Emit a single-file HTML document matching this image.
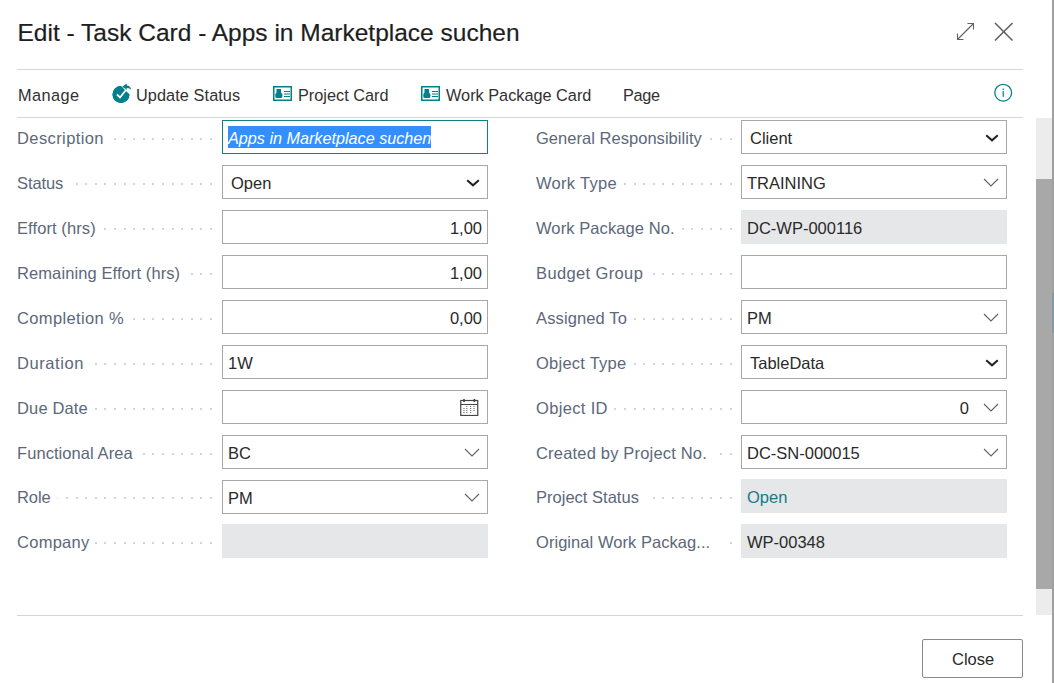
<!DOCTYPE html>
<html><head><meta charset="utf-8"><style>
html,body{margin:0;padding:0;width:1054px;height:683px;overflow:hidden;background:#fff;font-family:"Liberation Sans",sans-serif;}
.a{position:absolute}
.t,.lbl{position:absolute;font-size:16.5px;line-height:16.5px;white-space:nowrap;color:#2a2a2a}
.lbl{color:#5c687a}
.r{text-align:right}
.fld{position:absolute;border:1px solid #a8a8a8;background:#fff}
.fld.focus{border-color:#0e8080}
.ro{position:absolute;background:#e6e7e9}
.sel{position:absolute;background:#338fff}
.it{font-style:italic;color:#fff}
.ic{position:absolute;line-height:0}
.dot{position:absolute;width:2px;height:2px;border-radius:1px;background:#c3c7cd}
.ic svg{display:block}
</style></head><body>
<div class="t" style="left:17.5px;top:20.86px;font-size:24.5px;line-height:24.5px;color:#1e1e1e;-webkit-text-stroke:0.2px #1e1e1e">Edit - Task Card - Apps in Marketplace suchen</div>
<svg class="a" style="left:955px;top:21px" width="20" height="20" viewBox="0 0 20 20"><g fill="none" stroke="#616161" stroke-width="1.1"><path d="M2.5 18.5 L18.5 2.5"/><path d="M12.5 2.5 H18.5 V8.5"/><path d="M2.5 12.5 V18.5 H8.5"/></g></svg>
<svg class="a" style="left:993px;top:21px" width="21" height="21" viewBox="0 0 21 21"><g fill="none" stroke="#616161" stroke-width="1.6"><path d="M2 2 L19.5 19.5"/><path d="M19.5 2 L2 19.5"/></g></svg>
<div class="a" style="left:17px;top:69px;width:1006px;height:1px;background:#d2d5d9"></div>
<div class="a" style="left:17px;top:117px;width:1006px;height:1px;background:#d2d5d9"></div>
<div class="t" style="left:18px;top:86.63px;color:#323130;font-size:16.3px;letter-spacing:0.45px">Manage</div>
<svg class="a" style="left:111px;top:83px" width="21" height="21" viewBox="0 0 21 21"><path d="M10 3 A8.5 8.5 0 1 0 18.5 11.5" fill="#00808a"/><path fill="#00808a" d="M10 3 A8.5 8.5 0 0 0 1.5 11.5 A8.5 8.5 0 0 0 18.5 11.5 L14 8 Z"/><path d="M6 11.5 L9 14.5 L15 7" fill="none" stroke="#fff" stroke-width="1.8"/><path d="M11.2 3.7 L15.8 0.6 L15.8 2.5 Q19.4 2.7 20.2 6.8 Q18.6 4.9 15.8 5.0 L15.8 6.8 Z" fill="#00808a"/></svg>
<div class="t" style="left:136px;top:86.63px;color:#323130;font-size:16.3px;letter-spacing:0.08px">Update Status</div>
<svg class="a" style="left:273px;top:86px" width="19" height="15" viewBox="0 0 19 15"><rect x="0.75" y="0.75" width="17.5" height="13.5" fill="none" stroke="#00808a" stroke-width="1.5"/><path d="M3.5 3 H8 V6.5 Q9.5 7.5 9.5 9.5 Q9.5 12 8 12 H3.5 Q2.2 12 2.2 9.5 Q2.2 7.5 3.5 6.5 Z" fill="#00808a"/><g stroke="#00808a" stroke-width="1"><line x1="11" y1="5.5" x2="17" y2="5.5"/><line x1="11" y1="8" x2="17" y2="8"/><line x1="11" y1="10.5" x2="17" y2="10.5"/></g></svg>
<div class="t" style="left:298px;top:86.63px;color:#323130;font-size:16.3px">Project Card</div>
<svg class="a" style="left:421px;top:86px" width="19" height="15" viewBox="0 0 19 15"><rect x="0.75" y="0.75" width="17.5" height="13.5" fill="none" stroke="#00808a" stroke-width="1.5"/><path d="M3.5 3 H8 V6.5 Q9.5 7.5 9.5 9.5 Q9.5 12 8 12 H3.5 Q2.2 12 2.2 9.5 Q2.2 7.5 3.5 6.5 Z" fill="#00808a"/><g stroke="#00808a" stroke-width="1"><line x1="11" y1="5.5" x2="17" y2="5.5"/><line x1="11" y1="8" x2="17" y2="8"/><line x1="11" y1="10.5" x2="17" y2="10.5"/></g></svg>
<div class="t" style="left:446px;top:86.63px;color:#323130;font-size:16.3px">Work Package Card</div>
<div class="t" style="left:623px;top:86.63px;color:#323130;font-size:16.3px;letter-spacing:-0.3px">Page</div>
<svg class="a" style="left:993px;top:83px" width="21" height="21" viewBox="0 0 21 21"><circle cx="10.2" cy="9.7" r="8.4" fill="none" stroke="#00808a" stroke-width="1.3"/><circle cx="10.2" cy="6.3" r="0.8" fill="#00808a"/><rect x="9.6" y="8" width="1.2" height="5.8" fill="#00808a"/></svg>
<div class="lbl" style="left:17px;top:130.03px;letter-spacing:0.4px">Description</div><b class="dot" style="left:210px;top:138px"></b><b class="dot" style="left:200px;top:138px"></b><b class="dot" style="left:191px;top:138px"></b><b class="dot" style="left:181px;top:138px"></b><b class="dot" style="left:172px;top:138px"></b><b class="dot" style="left:162px;top:138px"></b><b class="dot" style="left:152px;top:138px"></b><b class="dot" style="left:143px;top:138px"></b><b class="dot" style="left:133px;top:138px"></b><b class="dot" style="left:124px;top:138px"></b><b class="dot" style="left:114px;top:138px"></b><div class="fld focus" style="left:222px;top:120px;width:264px;height:32px"></div><div class="sel" style="left:228px;top:126px;width:203px;height:22px"></div><div class="t it" style="left:228px;top:130.03px;font-size:16.2px">Apps in Marketplace suchen</div><div class="lbl" style="left:17px;top:175.03px;letter-spacing:-0.1px">Status</div><b class="dot" style="left:210px;top:183px"></b><b class="dot" style="left:200px;top:183px"></b><b class="dot" style="left:191px;top:183px"></b><b class="dot" style="left:181px;top:183px"></b><b class="dot" style="left:172px;top:183px"></b><b class="dot" style="left:162px;top:183px"></b><b class="dot" style="left:152px;top:183px"></b><b class="dot" style="left:143px;top:183px"></b><b class="dot" style="left:133px;top:183px"></b><b class="dot" style="left:124px;top:183px"></b><b class="dot" style="left:114px;top:183px"></b><b class="dot" style="left:104px;top:183px"></b><b class="dot" style="left:95px;top:183px"></b><b class="dot" style="left:85px;top:183px"></b><b class="dot" style="left:76px;top:183px"></b><div class="fld" style="left:222px;top:165px;width:264px;height:32px"></div><div class="t" style="left:231px;top:175.03px">Open</div><div class="ic" style="left:466px;top:179px"><svg class="chev" width="14" height="8" viewBox="0 0 14 8"><path d="M1.2 1.2 L7 6.3 L12.8 1.2" fill="none" stroke="#212121" stroke-width="2"/></svg></div><div class="lbl" style="left:17px;top:220.03px;letter-spacing:0.091px">Effort (hrs)</div><b class="dot" style="left:210px;top:228px"></b><b class="dot" style="left:200px;top:228px"></b><b class="dot" style="left:191px;top:228px"></b><b class="dot" style="left:181px;top:228px"></b><b class="dot" style="left:172px;top:228px"></b><b class="dot" style="left:162px;top:228px"></b><b class="dot" style="left:152px;top:228px"></b><b class="dot" style="left:143px;top:228px"></b><b class="dot" style="left:133px;top:228px"></b><b class="dot" style="left:124px;top:228px"></b><b class="dot" style="left:114px;top:228px"></b><b class="dot" style="left:104px;top:228px"></b><div class="fld" style="left:222px;top:210px;width:264px;height:32px"></div><div class="t r" style="right:572px;top:220.03px">1,00</div><div class="lbl" style="left:17px;top:265.03px;letter-spacing:0.095px">Remaining Effort (hrs)</div><b class="dot" style="left:210px;top:273px"></b><b class="dot" style="left:200px;top:273px"></b><b class="dot" style="left:191px;top:273px"></b><div class="fld" style="left:222px;top:255px;width:264px;height:32px"></div><div class="t r" style="right:572px;top:265.03px">1,00</div><div class="lbl" style="left:17px;top:310.03px;letter-spacing:0.364px">Completion %</div><b class="dot" style="left:210px;top:318px"></b><b class="dot" style="left:200px;top:318px"></b><b class="dot" style="left:191px;top:318px"></b><b class="dot" style="left:181px;top:318px"></b><b class="dot" style="left:172px;top:318px"></b><b class="dot" style="left:162px;top:318px"></b><b class="dot" style="left:152px;top:318px"></b><b class="dot" style="left:143px;top:318px"></b><b class="dot" style="left:133px;top:318px"></b><div class="fld" style="left:222px;top:300px;width:264px;height:32px"></div><div class="t r" style="right:572px;top:310.03px">0,00</div><div class="lbl" style="left:17px;top:355.03px;letter-spacing:0.571px">Duration</div><b class="dot" style="left:210px;top:363px"></b><b class="dot" style="left:200px;top:363px"></b><b class="dot" style="left:191px;top:363px"></b><b class="dot" style="left:181px;top:363px"></b><b class="dot" style="left:172px;top:363px"></b><b class="dot" style="left:162px;top:363px"></b><b class="dot" style="left:152px;top:363px"></b><b class="dot" style="left:143px;top:363px"></b><b class="dot" style="left:133px;top:363px"></b><b class="dot" style="left:124px;top:363px"></b><b class="dot" style="left:114px;top:363px"></b><b class="dot" style="left:104px;top:363px"></b><b class="dot" style="left:95px;top:363px"></b><div class="fld" style="left:222px;top:345px;width:264px;height:32px"></div><div class="t" style="left:228px;top:355.03px">1W</div><div class="lbl" style="left:17px;top:400.03px;letter-spacing:0.143px">Due Date</div><b class="dot" style="left:210px;top:408px"></b><b class="dot" style="left:200px;top:408px"></b><b class="dot" style="left:191px;top:408px"></b><b class="dot" style="left:181px;top:408px"></b><b class="dot" style="left:172px;top:408px"></b><b class="dot" style="left:162px;top:408px"></b><b class="dot" style="left:152px;top:408px"></b><b class="dot" style="left:143px;top:408px"></b><b class="dot" style="left:133px;top:408px"></b><b class="dot" style="left:124px;top:408px"></b><b class="dot" style="left:114px;top:408px"></b><b class="dot" style="left:104px;top:408px"></b><b class="dot" style="left:95px;top:408px"></b><div class="fld" style="left:222px;top:390px;width:264px;height:32px"></div><div class="ic" style="left:460px;top:399px"><svg class="cal" width="19" height="17" viewBox="0 0 19 17"><rect x="0.75" y="1.5" width="17" height="15" fill="none" stroke="#444" stroke-width="1.2"/><line x1="0.75" y1="5.5" x2="17.75" y2="5.5" stroke="#444" stroke-width="1"/><rect x="3.2" y="0" width="1.6" height="3" fill="#444"/><rect x="13.6" y="0" width="1.6" height="3" fill="#444"/>
<g fill="#777"><rect x="6.2" y="7" width="1.2" height="1"/><rect x="10" y="7" width="1.2" height="1"/><rect x="13.4" y="7" width="1.2" height="1"/>
<rect x="3.4" y="9" width="1.2" height="1"/><rect x="6.2" y="9" width="1.2" height="1"/><rect x="10" y="9" width="1.2" height="1"/><rect x="13.4" y="9" width="1.2" height="1"/>
<rect x="3.4" y="11" width="1.2" height="1"/><rect x="6.2" y="11" width="1.2" height="1"/><rect x="10" y="11" width="1.2" height="1"/><rect x="13.4" y="11" width="1.2" height="1"/>
<rect x="3.4" y="13" width="1.2" height="1"/><rect x="6.2" y="13" width="1.2" height="1"/><rect x="10" y="13" width="1.2" height="1"/></g></svg></div><div class="lbl" style="left:17px;top:445.03px;letter-spacing:0.071px">Functional Area</div><b class="dot" style="left:210px;top:453px"></b><b class="dot" style="left:200px;top:453px"></b><b class="dot" style="left:191px;top:453px"></b><b class="dot" style="left:181px;top:453px"></b><b class="dot" style="left:172px;top:453px"></b><b class="dot" style="left:162px;top:453px"></b><b class="dot" style="left:152px;top:453px"></b><b class="dot" style="left:143px;top:453px"></b><div class="fld" style="left:222px;top:435px;width:264px;height:32px"></div><div class="t" style="left:228px;top:445.03px">BC</div><div class="ic" style="left:464px;top:448px"><svg class="chev" width="16" height="9" viewBox="0 0 16 9"><path d="M1 1 L8 8 L15 1" fill="none" stroke="#616161" stroke-width="1.1"/></svg></div><div class="lbl" style="left:17px;top:489.03px;letter-spacing:-0.1px">Role</div><b class="dot" style="left:57px;top:497px;width:1px;opacity:0.5"></b><b class="dot" style="left:210px;top:497px"></b><b class="dot" style="left:200px;top:497px"></b><b class="dot" style="left:191px;top:497px"></b><b class="dot" style="left:181px;top:497px"></b><b class="dot" style="left:172px;top:497px"></b><b class="dot" style="left:162px;top:497px"></b><b class="dot" style="left:152px;top:497px"></b><b class="dot" style="left:143px;top:497px"></b><b class="dot" style="left:133px;top:497px"></b><b class="dot" style="left:124px;top:497px"></b><b class="dot" style="left:114px;top:497px"></b><b class="dot" style="left:104px;top:497px"></b><b class="dot" style="left:95px;top:497px"></b><b class="dot" style="left:85px;top:497px"></b><b class="dot" style="left:76px;top:497px"></b><b class="dot" style="left:66px;top:497px"></b><div class="fld" style="left:222px;top:480px;width:264px;height:32px"></div><div class="t" style="left:228px;top:490.03px">PM</div><div class="ic" style="left:464px;top:493px"><svg class="chev" width="16" height="9" viewBox="0 0 16 9"><path d="M1 1 L8 8 L15 1" fill="none" stroke="#616161" stroke-width="1.1"/></svg></div><div class="lbl" style="left:17px;top:534.03px;letter-spacing:0.267px">Company</div><b class="dot" style="left:210px;top:542px"></b><b class="dot" style="left:200px;top:542px"></b><b class="dot" style="left:191px;top:542px"></b><b class="dot" style="left:181px;top:542px"></b><b class="dot" style="left:172px;top:542px"></b><b class="dot" style="left:162px;top:542px"></b><b class="dot" style="left:152px;top:542px"></b><b class="dot" style="left:143px;top:542px"></b><b class="dot" style="left:133px;top:542px"></b><b class="dot" style="left:124px;top:542px"></b><b class="dot" style="left:114px;top:542px"></b><b class="dot" style="left:104px;top:542px"></b><b class="dot" style="left:95px;top:542px"></b><div class="ro" style="left:222px;top:524px;width:266px;height:34px"></div><div class="lbl" style="left:536px;top:130.03px;letter-spacing:0.033px">General Responsibility</div><b class="dot" style="left:730px;top:138px"></b><b class="dot" style="left:720px;top:138px"></b><b class="dot" style="left:710px;top:138px"></b><div class="fld" style="left:741px;top:120px;width:264px;height:32px"></div><div class="t" style="left:750px;top:130.03px">Client</div><div class="ic" style="left:985px;top:134px"><svg class="chev" width="14" height="8" viewBox="0 0 14 8"><path d="M1.2 1.2 L7 6.3 L12.8 1.2" fill="none" stroke="#212121" stroke-width="2"/></svg></div><div class="lbl" style="left:536px;top:175.03px;letter-spacing:0.3px">Work Type</div><b class="dot" style="left:730px;top:183px"></b><b class="dot" style="left:720px;top:183px"></b><b class="dot" style="left:710px;top:183px"></b><b class="dot" style="left:701px;top:183px"></b><b class="dot" style="left:691px;top:183px"></b><b class="dot" style="left:682px;top:183px"></b><b class="dot" style="left:672px;top:183px"></b><b class="dot" style="left:662px;top:183px"></b><b class="dot" style="left:653px;top:183px"></b><b class="dot" style="left:643px;top:183px"></b><b class="dot" style="left:634px;top:183px"></b><b class="dot" style="left:624px;top:183px"></b><div class="fld" style="left:741px;top:165px;width:264px;height:32px"></div><div class="t" style="left:747px;top:175.03px">TRAINING</div><div class="ic" style="left:983px;top:178px"><svg class="chev" width="16" height="9" viewBox="0 0 16 9"><path d="M1 1 L8 8 L15 1" fill="none" stroke="#616161" stroke-width="1.1"/></svg></div><div class="lbl" style="left:536px;top:220.03px;letter-spacing:0.093px">Work Package No.</div><b class="dot" style="left:730px;top:228px"></b><b class="dot" style="left:720px;top:228px"></b><b class="dot" style="left:710px;top:228px"></b><b class="dot" style="left:701px;top:228px"></b><b class="dot" style="left:691px;top:228px"></b><b class="dot" style="left:682px;top:228px"></b><div class="ro" style="left:741px;top:210px;width:266px;height:34px"></div><div class="t" style="left:747px;top:220.03px;color:#2a2a2a">DC-WP-000116</div><div class="lbl" style="left:536px;top:265.03px;letter-spacing:0.373px">Budget Group</div><b class="dot" style="left:730px;top:273px"></b><b class="dot" style="left:720px;top:273px"></b><b class="dot" style="left:710px;top:273px"></b><b class="dot" style="left:701px;top:273px"></b><b class="dot" style="left:691px;top:273px"></b><b class="dot" style="left:682px;top:273px"></b><b class="dot" style="left:672px;top:273px"></b><b class="dot" style="left:662px;top:273px"></b><b class="dot" style="left:653px;top:273px"></b><div class="fld" style="left:741px;top:255px;width:264px;height:32px"></div><div class="lbl" style="left:536px;top:310.03px;letter-spacing:0.13px">Assigned To</div><b class="dot" style="left:730px;top:318px"></b><b class="dot" style="left:720px;top:318px"></b><b class="dot" style="left:710px;top:318px"></b><b class="dot" style="left:701px;top:318px"></b><b class="dot" style="left:691px;top:318px"></b><b class="dot" style="left:682px;top:318px"></b><b class="dot" style="left:672px;top:318px"></b><b class="dot" style="left:662px;top:318px"></b><b class="dot" style="left:653px;top:318px"></b><b class="dot" style="left:643px;top:318px"></b><b class="dot" style="left:634px;top:318px"></b><div class="fld" style="left:741px;top:300px;width:264px;height:32px"></div><div class="t" style="left:747px;top:310.03px">PM</div><div class="ic" style="left:983px;top:313px"><svg class="chev" width="16" height="9" viewBox="0 0 16 9"><path d="M1 1 L8 8 L15 1" fill="none" stroke="#616161" stroke-width="1.1"/></svg></div><div class="lbl" style="left:536px;top:355.03px;letter-spacing:0.24px">Object Type</div><b class="dot" style="left:730px;top:363px"></b><b class="dot" style="left:720px;top:363px"></b><b class="dot" style="left:710px;top:363px"></b><b class="dot" style="left:701px;top:363px"></b><b class="dot" style="left:691px;top:363px"></b><b class="dot" style="left:682px;top:363px"></b><b class="dot" style="left:672px;top:363px"></b><b class="dot" style="left:662px;top:363px"></b><b class="dot" style="left:653px;top:363px"></b><b class="dot" style="left:643px;top:363px"></b><b class="dot" style="left:634px;top:363px"></b><div class="fld" style="left:741px;top:345px;width:264px;height:32px"></div><div class="t" style="left:750px;top:355.03px">TableData</div><div class="ic" style="left:985px;top:359px"><svg class="chev" width="14" height="8" viewBox="0 0 14 8"><path d="M1.2 1.2 L7 6.3 L12.8 1.2" fill="none" stroke="#212121" stroke-width="2"/></svg></div><div class="lbl" style="left:536px;top:400.03px;letter-spacing:0.338px">Object ID</div><b class="dot" style="left:730px;top:408px"></b><b class="dot" style="left:720px;top:408px"></b><b class="dot" style="left:710px;top:408px"></b><b class="dot" style="left:701px;top:408px"></b><b class="dot" style="left:691px;top:408px"></b><b class="dot" style="left:682px;top:408px"></b><b class="dot" style="left:672px;top:408px"></b><b class="dot" style="left:662px;top:408px"></b><b class="dot" style="left:653px;top:408px"></b><b class="dot" style="left:643px;top:408px"></b><b class="dot" style="left:634px;top:408px"></b><b class="dot" style="left:624px;top:408px"></b><b class="dot" style="left:614px;top:408px"></b><div class="fld" style="left:741px;top:390px;width:264px;height:32px"></div><div class="t r" style="right:85px;top:400.03px">0</div><div class="ic" style="left:983px;top:403px"><svg class="chev" width="16" height="9" viewBox="0 0 16 9"><path d="M1 1 L8 8 L15 1" fill="none" stroke="#616161" stroke-width="1.1"/></svg></div><div class="lbl" style="left:536px;top:445.03px;letter-spacing:0.186px">Created by Project No.</div><b class="dot" style="left:730px;top:453px"></b><b class="dot" style="left:720px;top:453px"></b><div class="fld" style="left:741px;top:435px;width:264px;height:32px"></div><div class="t" style="left:747px;top:445.03px">DC-SN-000015</div><div class="ic" style="left:983px;top:448px"><svg class="chev" width="16" height="9" viewBox="0 0 16 9"><path d="M1 1 L8 8 L15 1" fill="none" stroke="#616161" stroke-width="1.1"/></svg></div><div class="lbl" style="left:536px;top:489.03px;letter-spacing:0.015px">Project Status</div><b class="dot" style="left:730px;top:497px"></b><b class="dot" style="left:720px;top:497px"></b><b class="dot" style="left:710px;top:497px"></b><b class="dot" style="left:701px;top:497px"></b><b class="dot" style="left:691px;top:497px"></b><b class="dot" style="left:682px;top:497px"></b><b class="dot" style="left:672px;top:497px"></b><b class="dot" style="left:662px;top:497px"></b><b class="dot" style="left:653px;top:497px"></b><div class="ro" style="left:741px;top:479px;width:266px;height:34px"></div><div class="t" style="left:747px;top:489.03px;color:#167a88">Open</div><div class="lbl" style="left:536px;top:534.03px;letter-spacing:0.05px">Original Work Packag...</div><b class="dot" style="left:730px;top:542px"></b><div class="ro" style="left:741px;top:524px;width:266px;height:34px"></div><div class="t" style="left:747px;top:534.03px;color:#2a2a2a">WP-00348</div>
<div class="a" style="left:17px;top:615px;width:1006px;height:1px;background:#d2d5d9"></div>
<div class="a" style="left:922px;top:639px;width:99px;height:37px;border:1px solid #8a8a8a;border-radius:2px"></div>
<div class="t" style="left:952px;top:650.63px">Close</div>
<div class="a" style="left:1036px;top:118px;width:16px;height:497px;background:#ececec"></div>
<div class="a" style="left:1036px;top:179px;width:16px;height:410px;background:#a8a8a8"></div>
<div class="a" style="left:1052px;top:0;width:2px;height:683px;background:#a0a0a0"></div>
<div class="a" style="left:1052px;top:293px;width:2px;height:40px;background:#7f9d9f"></div>
</body></html>
